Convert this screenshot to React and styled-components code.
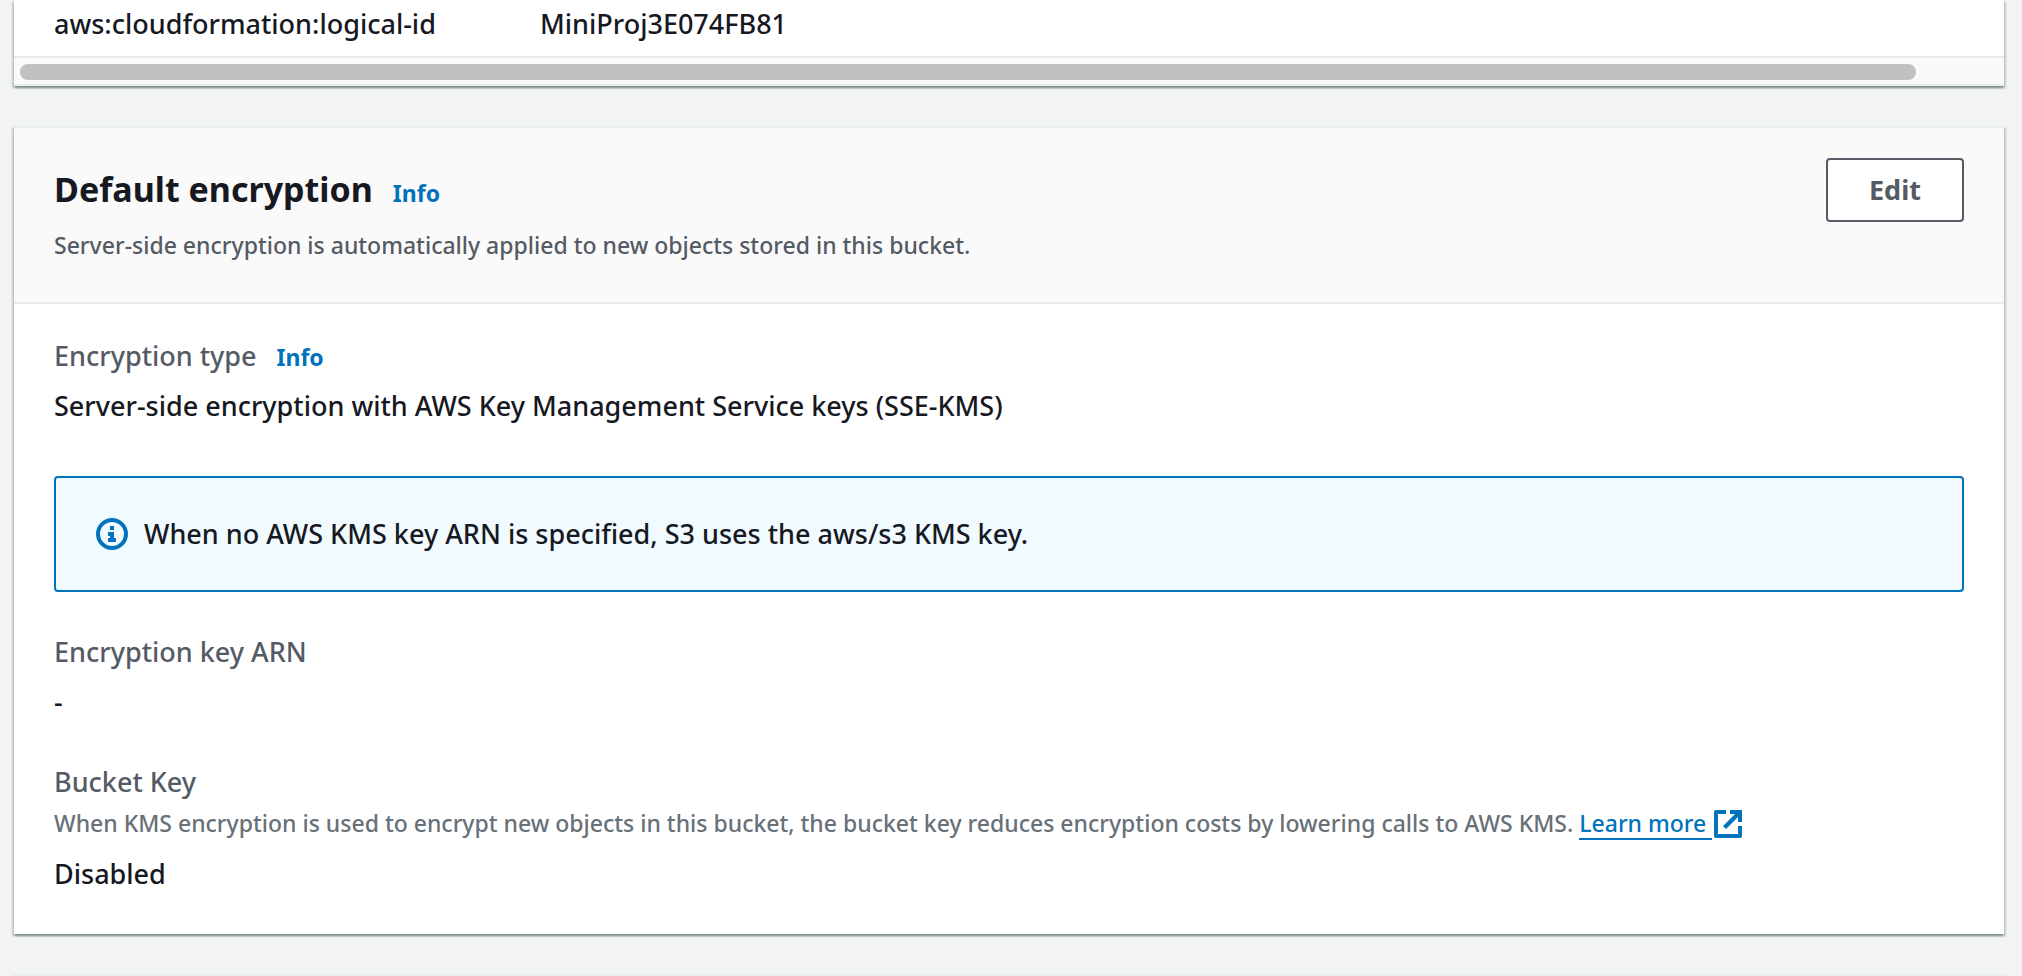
import React from "react";
import styled, { createGlobalStyle } from "styled-components";

const GlobalStyle = createGlobalStyle`
  *, *::before, *::after { box-sizing: border-box; }
  body {
    margin: 0;
    background: #f2f3f3;
    color: #16191f;
    font-family: "Noto Sans", "Open Sans", sans-serif;
    font-size: 27px;
    font-weight: 500;
    line-height: 44px;
    -webkit-font-smoothing: antialiased;
  }
`;

const Page = styled.main`
  display: flex;
  flex-direction: column;
  gap: 40px;
  min-height: 100vh;
  padding: 0 18px 0 14px;
`;

const Panel = styled.section`
  flex: ${(p) => (p.$fill ? "1 0 2px" : "none")};
  background: #ffffff;
  border-top: ${(p) => (p.$continued ? "0" : "2px solid #eaeded")};
  box-shadow: 0 2px 2px 0 rgba(0, 28, 36, 0.3), 2px 2px 2px 0 rgba(0, 28, 36, 0.15),
    -2px 2px 2px 0 rgba(0, 28, 36, 0.15);
`;

const TagTable = styled.table`
  width: 100%;
  table-layout: fixed;
  border-collapse: collapse;
`;

const TagName = styled.th`
  width: 486px;
  padding: 2px 0 10px 40px;
  font-weight: 500;
  text-align: left;
`;

const TagValue = styled.td`
  padding: 2px 40px 10px;
`;

const ScrollTrack = styled.div`
  height: 30px;
  padding: 6px 88px 6px 6px;
  background: #fafafa;
  border-top: 2px solid #e8e8e8;
  border-bottom: 2px solid #eaeded;
`;

const ScrollThumb = styled.div`
  height: 16px;
  border-radius: 8px;
  background: #c1c1c1;
`;

const PanelHeader = styled.header`
  display: flex;
  justify-content: space-between;
  align-items: flex-start;
  padding: 30px 40px 38px;
  background: #fafafa;
  border-bottom: 2px solid #eaeded;
`;

const TitleRow = styled.div`
  display: flex;
  align-items: baseline;
  gap: 20px;
  margin-bottom: 6px;
`;

const Title = styled.h2`
  margin: 0;
  font-size: 34px;
  line-height: 62px;
  font-weight: 700;
`;

const InfoLink = styled.a`
  color: #0073bb;
  font-size: 23px;
  line-height: 30px;
  font-weight: 700;
  text-decoration: none;
`;

const Description = styled.p`
  margin: 0;
  color: #545b64;
  font-size: 23px;
  line-height: 38px;
`;

const EditButton = styled.button`
  width: 138px;
  height: 64px;
  border: 2px solid #545b64;
  border-radius: 4px;
  background: #ffffff;
  color: #545b64;
  font: inherit;
  font-weight: 700;
`;

const Body = styled.div`
  display: flex;
  flex-direction: column;
  gap: 36px;
  padding: 30px 40px 38px;
`;

const Field = styled.dl`
  margin: 0;
`;

const Label = styled.dt`
  display: flex;
  align-items: baseline;
  gap: 20px;
  color: #545b64;
`;

const Hint = styled.dd`
  margin: 0 0 4px;
  color: #687078;
  font-size: 23px;
  line-height: 38px;
`;

const Value = styled.dd`
  margin: 0;
  padding-top: 6px;
`;

const Alert = styled.div`
  display: flex;
  align-items: center;
  gap: 16px;
  margin: 12px 0 2px;
  padding: 34px 40px;
  border: 2px solid #0073bb;
  border-radius: 4px;
  background: #f1faff;
`;

const LearnMore = styled.a`
  display: inline-flex;
  align-items: center;
  gap: 2px;
  color: #0073bb;
  line-height: 30px;
  text-decoration: none;
`;

const Underlined = styled.span`
  padding-right: 6px;
  border-bottom: 2px solid #0073bb;
`;

const InfoIcon = () => (
  <svg width="32" height="32" viewBox="0 0 32 32" aria-hidden="true">
    <circle cx="16" cy="16" r="14" fill="none" stroke="#0073bb" strokeWidth="4" />
    <path d="M14 8h4v4h-4zM12 14h6v6h2v4h-8v-4h2v-2h-2z" fill="#0073bb" />
  </svg>
);

const ExternalIcon = () => (
  <svg width="28" height="28" viewBox="0 0 28 28" aria-hidden="true">
    <path
      d="M12 2H2v24h24V16"
      fill="none"
      stroke="#0073bb"
      strokeWidth="4"
      strokeLinejoin="round"
    />
    <path d="M16 0h12v12h-4V7L12 19l-3-3L21 4h-5z" fill="#0073bb" />
  </svg>
);

export default function App() {
  return (
    <>
      <GlobalStyle />
      <Page>
        <Panel $continued>
          <TagTable>
            <tbody>
              <tr>
                <TagName scope="row">aws:cloudformation:logical-id</TagName>
                <TagValue>MiniProj3E074FB81</TagValue>
              </tr>
            </tbody>
          </TagTable>
          <ScrollTrack>
            <ScrollThumb />
          </ScrollTrack>
        </Panel>

        <Panel>
          <PanelHeader>
            <div>
              <TitleRow>
                <Title>Default encryption</Title>
                <InfoLink href="#encryption-info">Info</InfoLink>
              </TitleRow>
              <Description>
                Server-side encryption is automatically applied to new objects stored in this bucket.
              </Description>
            </div>
            <EditButton type="button">Edit</EditButton>
          </PanelHeader>
          <Body>
            <Field>
              <Label>
                Encryption type <InfoLink href="#type-info">Info</InfoLink>
              </Label>
              <Value>Server-side encryption with AWS Key Management Service keys (SSE-KMS)</Value>
            </Field>
            <Alert role="note">
              <InfoIcon />
              <span>When no AWS KMS key ARN is specified, S3 uses the aws/s3 KMS key.</span>
            </Alert>
            <Field>
              <Label>Encryption key ARN</Label>
              <Value>-</Value>
            </Field>
            <Field>
              <Label>Bucket Key</Label>
              <Hint>
                When KMS encryption is used to encrypt new objects in this bucket, the bucket key
                reduces encryption costs by lowering calls to AWS KMS.{" "}
                <LearnMore href="#learn-more">
                  <Underlined>Learn more</Underlined>
                  <ExternalIcon />
                </LearnMore>
              </Hint>
              <Value>Disabled</Value>
            </Field>
          </Body>
        </Panel>

        <Panel $fill />
      </Page>
    </>
  );
}
